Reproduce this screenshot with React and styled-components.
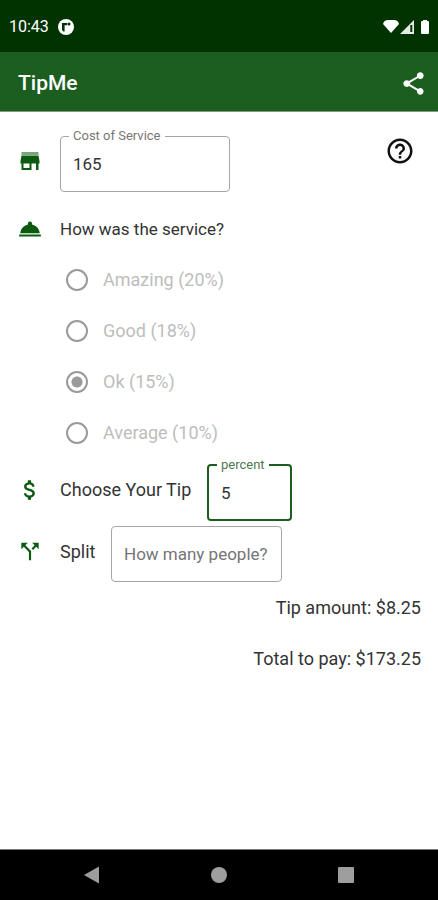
import React, { useState } from "react";
import styled, { createGlobalStyle } from "styled-components";
import {
  MdRoomService,
  MdAttachMoney,
  MdCallSplit,
  MdHelpOutline,
  MdShare,
} from "react-icons/md";

const ratings = [
  { value: "20", label: "Amazing (20%)" },
  { value: "18", label: "Good (18%)" },
  { value: "15", label: "Ok (15%)" },
  { value: "10", label: "Average (10%)" },
];

const TextField = ({ id, label, value, onChange, placeholder, width, active }) => (
  <Outline $width={width} $active={active}>
    {label && (
      <legend>
        <label htmlFor={id}>{label}</label>
      </legend>
    )}
    <input
      id={id}
      type="text"
      inputMode="decimal"
      value={value}
      placeholder={placeholder}
      onChange={(e) => onChange(e.target.value)}
    />
  </Outline>
);

const StatusIcons = () => (
  <svg width="48" height="16" viewBox="0 0 48 16" fill="#fff" aria-hidden="true">
    <path d="M0 5Q1 1 5 1H11Q15 1 16 5L8 14Z" />
    <path d="M31 1V15H17Z" opacity="0.9" />
    <path d="M27.3 6h2v7h-2z" fill="#003300" />
    <path d="M40 1h4v1h1q1 0 1 1v11q0 1-1 1h-6q-1 0-1-1V3q0-1 1-1h1z" />
  </svg>
);

const StoreIcon = () => (
  <svg width="26" height="26" viewBox="0 0 26 26" fill="currentColor" aria-hidden="true">
    <path d="M4.5 4h17v3h-17z" opacity="0.55" />
    <path d="M4.5 7.5h17l1 5.5v2.5h-1V22H19v-6.5h-4.5V22h-10v-6.5h-1V13zM6.5 15.5V20h6v-4.5z" fillRule="evenodd" />
  </svg>
);

const App = () => {
  const [cost, setCost] = useState("165");
  const [percent, setPercent] = useState("5");
  const [people, setPeople] = useState("");

  const bill = Number(cost) || 0;
  const tip = (bill * (Number(percent) || 0)) / 100;

  return (
    <Screen>
      <GlobalStyle />
      <StatusBar>
        <span>10:43</span>
        <svg width="16" height="16" viewBox="0 0 16 16" aria-hidden="true">
          <circle cx="8" cy="8" r="8" fill="#fff" />
          <path d="M4 4h2.6v8.6H5.2L4 11zM6.6 4h2.6v2.2H6.6z" fill="#003300" />
          <circle cx="11" cy="5" r="1.5" fill="#003300" />
        </svg>
        <Spacer />
        <StatusIcons />
      </StatusBar>
      <AppBar>
        <h1>TipMe</h1>
        <IconButton aria-label="Share">
          <MdShare size={27} />
        </IconButton>
      </AppBar>

      <Content>
        <Row>
          <StoreIcon />
          <TextField
            id="cost"
            label="Cost of Service"
            value={cost}
            onChange={setCost}
            width={170}
          />
          <Spacer />
          <HelpButton aria-label="Help">
            <MdHelpOutline size={30} />
          </HelpButton>
        </Row>

        <Question>
          <MdRoomService size={26} />
          <span id="service">How was the service?</span>
        </Question>
        <Ratings role="radiogroup" aria-labelledby="service">
          {ratings.map((r) => (
            <Rating key={r.value}>
              <input type="radio" name="rating" value={r.value} defaultChecked={r.value === "15"} disabled />
              {r.label}
            </Rating>
          ))}
        </Ratings>

        <Row>
          <MdAttachMoney size={26} />
          <RowLabel $width={133}>Choose Your Tip</RowLabel>
          <TextField
            id="percent"
            label="percent"
            value={percent}
            onChange={setPercent}
            width={85}
            active
          />
        </Row>
        <SplitRow>
          <MdCallSplit size={26} />
          <RowLabel as="label" htmlFor="people" $width={37}>Split</RowLabel>
          <TextField
            id="people"
            value={people}
            onChange={setPeople}
            placeholder="How many people?"
            width={171}
          />
        </SplitRow>

        <Result>Tip amount: ${tip.toFixed(2)}</Result>
        <Result>Total to pay: ${(bill + tip).toFixed(2)}</Result>
      </Content>

      <NavBar>
        <button aria-label="Back">
          <svg width="18" height="18" viewBox="0 0 18 18">
            <path d="M1 9L16 0.5V17.5Z" fill="#9e9e9e" />
          </svg>
        </button>
        <button aria-label="Home">
          <svg width="18" height="18" viewBox="0 0 18 18">
            <circle cx="9" cy="9" r="8" fill="#9e9e9e" />
          </svg>
        </button>
        <button aria-label="Recent apps">
          <svg width="18" height="18" viewBox="0 0 18 18">
            <rect x="1" y="1" width="16" height="16" rx="1" fill="#9e9e9e" />
          </svg>
        </button>
      </NavBar>
    </Screen>
  );
};

const GlobalStyle = createGlobalStyle`
  * {
    box-sizing: border-box;
  }
  body {
    margin: 0;
    background: #fff;
    color: #333;
    font-family: Roboto, sans-serif;
    font-size: 17px;
    line-height: 24px;
  }
  button {
    display: flex;
    align-items: center;
    justify-content: center;
    padding: 0;
    border: none;
    background: none;
    color: inherit;
    cursor: pointer;
  }
  svg {
    flex-shrink: 0;
  }
`;

const Screen = styled.div`
  display: flex;
  flex-direction: column;
  min-height: 100vh;
`;

const Spacer = styled.div`
  flex: 1;
`;

const StatusBar = styled.div`
  display: flex;
  align-items: center;
  gap: 9px;
  height: 52px;
  padding: 2px 7px 0 9px;
  background: #003300;
  color: #fff;
  font-size: 16px;
`;

const AppBar = styled.header`
  display: flex;
  align-items: center;
  justify-content: space-between;
  height: 60px;
  padding: 3px 4px 0 18px;
  background: #1b5e20;
  border-bottom: 1px solid #7c9c7e;
  color: #fff;
  h1 {
    margin: 0;
    font-size: 21px;
    font-weight: 500;
  }
`;

const IconButton = styled.button`
  width: 42px;
  height: 44px;
`;

const HelpButton = styled(IconButton)`
  align-self: flex-start;
  color: #111;
`;

const Content = styled.main`
  flex: 1;
  padding: 17px 17px 24px;
`;

const Row = styled.div`
  display: flex;
  align-items: center;
  gap: 17px;
  > svg {
    color: #0b5a10;
  }
`;

const Question = styled(Row)`
  height: 51px;
  margin-top: 11px;
`;

const RowLabel = styled.span`
  min-width: ${(p) => p.$width}px;
  margin-right: -3px;
  font-size: 18px;
`;

/* the icon and label centre on the 51px line, the taller field hangs below it */
const SplitRow = styled(Row)`
  align-items: flex-start;
  margin-top: 5px;
  > svg {
    height: 51px;
  }
  ${RowLabel} {
    line-height: 52px;
  }
`;

const Outline = styled.fieldset`
  width: ${(p) => p.$width}px;
  min-width: 0;
  margin: 0;
  padding: 0 12px;
  border: ${(p) => (p.$active ? "2px solid #1b5e20" : "1px solid #a6a6a6")};
  border-radius: 4px;
  legend {
    margin-left: -4px;
    padding: 0 4px;
    color: ${(p) => (p.$active ? "#4c7a50" : "#777")};
    font-size: 13px;
    line-height: 14px;
  }
  input {
    display: block;
    width: 100%;
    height: ${(p) => (p.$active ? 47 : 48)}px;
    padding: 0 0 6px;
    border: none;
    outline: none;
    background: none;
    color: #333;
    font: inherit;
  }
  input:first-child {
    height: 54px;
    padding: 0;
  }
  input::placeholder {
    color: #757575;
    opacity: 1;
  }
`;

const Ratings = styled.div`
  padding-left: 49px;
`;

const Rating = styled.label`
  display: flex;
  align-items: center;
  gap: 15px;
  height: 51px;
  color: #bdbdbd;
  font-size: 18px;
  input {
    appearance: none;
    width: 22px;
    height: 22px;
    margin: 0;
    border: 2px solid #9a9a9a;
    border-radius: 50%;
  }
  input:checked {
    background: radial-gradient(circle, #9a9a9a 5px, transparent 6px);
  }
`;

const Result = styled.div`
  display: flex;
  align-items: center;
  justify-content: flex-end;
  height: 51px;
  font-size: 18px;
`;

const NavBar = styled.nav`
  display: flex;
  align-items: center;
  justify-content: space-between;
  height: 51px;
  padding: 0 68px;
  border-top: 1px solid #777;
  background: #000;
  button {
    width: 48px;
    height: 48px;
  }
`;

export default App;
